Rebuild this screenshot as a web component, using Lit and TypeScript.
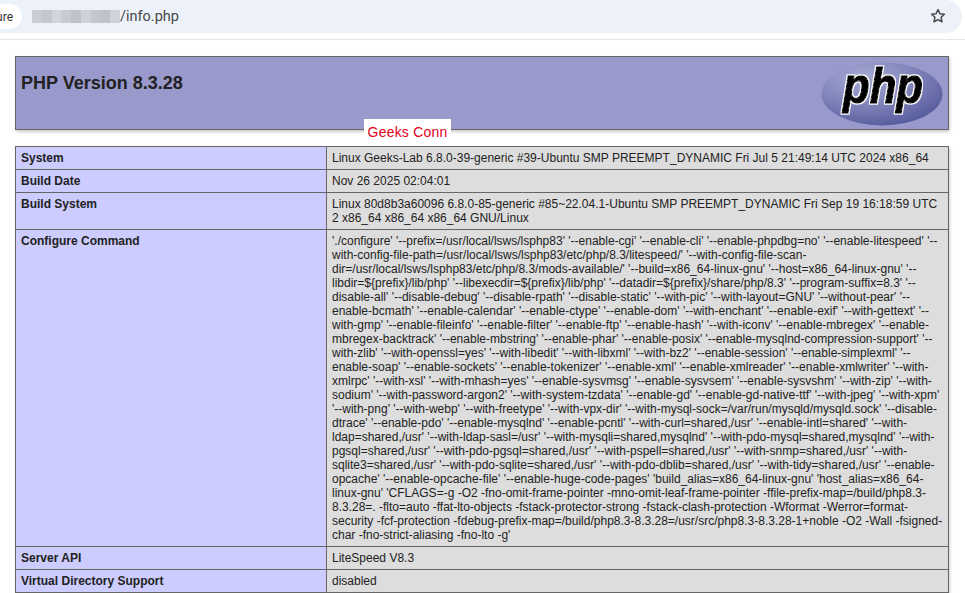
import { LitElement, html, css } from "lit";
import { customElement } from "lit/decorators.js";

const CONFIG = [
  "'./configure' '--prefix=/usr/local/lsws/lsphp83' '--enable-cgi' '--enable-cli' '--enable-phpdbg=no' '--enable-litespeed' '--",
  "with-config-file-path=/usr/local/lsws/lsphp83/etc/php/8.3/litespeed/' '--with-config-file-scan-",
  "dir=/usr/local/lsws/lsphp83/etc/php/8.3/mods-available/' '--build=x86_64-linux-gnu' '--host=x86_64-linux-gnu' '--",
  "libdir=${prefix}/lib/php' '--libexecdir=${prefix}/lib/php' '--datadir=${prefix}/share/php/8.3' '--program-suffix=8.3' '--",
  "disable-all' '--disable-debug' '--disable-rpath' '--disable-static' '--with-pic' '--with-layout=GNU' '--without-pear' '--",
  "enable-bcmath' '--enable-calendar' '--enable-ctype' '--enable-dom' '--with-enchant' '--enable-exif' '--with-gettext' '--",
  "with-gmp' '--enable-fileinfo' '--enable-filter' '--enable-ftp' '--enable-hash' '--with-iconv' '--enable-mbregex' '--enable-",
  "mbregex-backtrack' '--enable-mbstring' '--enable-phar' '--enable-posix' '--enable-mysqlnd-compression-support' '--",
  "with-zlib' '--with-openssl=yes' '--with-libedit' '--with-libxml' '--with-bz2' '--enable-session' '--enable-simplexml' '--",
  "enable-soap' '--enable-sockets' '--enable-tokenizer' '--enable-xml' '--enable-xmlreader' '--enable-xmlwriter' '--with-",
  "xmlrpc' '--with-xsl' '--with-mhash=yes' '--enable-sysvmsg' '--enable-sysvsem' '--enable-sysvshm' '--with-zip' '--with-",
  "sodium' '--with-password-argon2' '--with-system-tzdata' '--enable-gd' '--enable-gd-native-ttf' '--with-jpeg' '--with-xpm'",
  "'--with-png' '--with-webp' '--with-freetype' '--with-vpx-dir' '--with-mysql-sock=/var/run/mysqld/mysqld.sock' '--disable-",
  "dtrace' '--enable-pdo' '--enable-mysqlnd' '--enable-pcntl' '--with-curl=shared,/usr' '--enable-intl=shared' '--with-",
  "ldap=shared,/usr' '--with-ldap-sasl=/usr' '--with-mysqli=shared,mysqlnd' '--with-pdo-mysql=shared,mysqlnd' '--with-",
  "pgsql=shared,/usr' '--with-pdo-pgsql=shared,/usr' '--with-pspell=shared,/usr' '--with-snmp=shared,/usr' '--with-",
  "sqlite3=shared,/usr' '--with-pdo-sqlite=shared,/usr' '--with-pdo-dblib=shared,/usr' '--with-tidy=shared,/usr' '--enable-",
  "opcache' '--enable-opcache-file' '--enable-huge-code-pages' 'build_alias=x86_64-linux-gnu' 'host_alias=x86_64-",
  "linux-gnu' 'CFLAGS=-g -O2 -fno-omit-frame-pointer -mno-omit-leaf-frame-pointer -ffile-prefix-map=/build/php8.3-",
  "8.3.28=. -flto=auto -ffat-lto-objects -fstack-protector-strong -fstack-clash-protection -Wformat -Werror=format-",
  "security -fcf-protection -fdebug-prefix-map=/build/php8.3-8.3.28=/usr/src/php8.3-8.3.28-1+noble -O2 -Wall -fsigned-",
  "char -fno-strict-aliasing -fno-lto -g'",
];

const BLUR = ["#c9cdd4", "#c3c7ce", "#d2d5da", "#c8cbd1", "#bfc3ca", "#ced1d7", "#c4c8ce", "#bfc2c9", "#d0d3d9"];

@customElement("app-root")
export class AppRoot extends LitElement {
  static styles = css`
    :host {
      display: block;
      position: relative;
      width: 965px;
      height: 593px;
      overflow: hidden;
      background: #fff;
      color: #222;
      font-family: "Liberation Sans", Arial, sans-serif;
    }
    .toolbar {
      height: 40px;
      box-sizing: border-box;
      border-bottom: 1px solid #e6e6e9;
      background: #fff;
    }
    .omnibox {
      width: 962px;
      height: 33px;
      background: #edf2fa;
      border-radius: 0 17px 17px 0;
      display: flex;
      align-items: center;
      font-family: Roboto, "Liberation Sans", sans-serif;
      font-size: 14.5px;
      color: #474747;
    }
    .chip {
      width: 22px;
      height: 25px;
      margin-right: 10px;
      border-radius: 0 13px 13px 0;
      background: #fff;
      display: flex;
      align-items: center;
      justify-content: flex-end;
      padding-right: 9px;
      box-sizing: border-box;
      font-size: 12px;
      color: #333;
      white-space: nowrap;
    }
    .blur {
      display: flex;
      width: 88px;
      height: 13px;
    }
    .blur i {
      flex: 1;
      display: block;
    }
    .star {
      margin-left: auto;
      margin-right: 16px;
      width: 16px;
      height: 16px;
      margin-top: -1px;
    }
    .page {
      padding: 16px 16px 0 15px;
      font-size: 12px;
      line-height: 14px;
    }
    .head {
      box-sizing: border-box;
      height: 74px;
      border: 1px solid #666;
      background: #9999cc;
      box-shadow: 1px 2px 3px #ccc;
      display: flex;
      justify-content: space-between;
      padding: 0 5px;
    }
    h1 {
      margin: 16px 0 0;
      font-size: 18px;
      line-height: 21px;
      font-weight: bold;
      color: #222;
    }
    .logo {
      width: 122px;
      height: 64px;
      margin-top: 5px;
    }
    table {
      margin-top: 16px;
      width: 934px;
      border-collapse: collapse;
      table-layout: fixed;
      box-shadow: 1px 2px 3px #ccc;
    }
    td {
      border: 1px solid #666;
      padding: 4px 5px;
      vertical-align: baseline;
      white-space: nowrap;
    }
    .e {
      width: 300px;
      background: #ccccff;
      font-weight: bold;
    }
    .v {
      background: #dddddd;
    }
    .tag {
      position: absolute;
      left: 364px;
      top: 119px;
      width: 87px;
      height: 22px;
      background: #fff;
      color: #e2001a;
      font-size: 14px;
      line-height: 26px;
      text-align: center;
      letter-spacing: 0.2px;
    }
  `;

  private row(label: string, value: unknown) {
    return html`<tr><td class="e">${label}</td><td class="v">${value}</td></tr>`;
  }

  render() {
    return html`
      <div class="toolbar">
        <div class="omnibox">
          <div class="chip">ure</div>
          <div class="blur">${BLUR.map((c) => html`<i style="background:${c}"></i>`)}</div>
          <span>/info.php</span>
          <svg class="star" viewBox="0 0 16 16" fill="none" stroke="#474747" stroke-width="1.5" stroke-linejoin="round">
            <path d="M8 1.6l1.95 4.1 4.45.55-3.28 3.07.85 4.45L8 11.6l-3.97 2.17.85-4.45L1.6 6.25l4.45-.55z" />
          </svg>
        </div>
      </div>
      <div class="page">
        <div class="head">
          <h1>PHP Version 8.3.28</h1>
          <svg class="logo" viewBox="0 0 122 64">
            <defs>
              <radialGradient id="g" cx="35%" cy="25%" r="85%">
                <stop offset="0" stop-color="#a8abd6" />
                <stop offset="0.6" stop-color="#777bb3" />
                <stop offset="1" stop-color="#4f5499" />
              </radialGradient>
              <filter id="halo" x="-10%" y="-10%" width="120%" height="120%">
                <feMorphology in="SourceAlpha" operator="dilate" radius="0.8" result="d" />
                <feFlood flood-color="#fff" />
                <feComposite in2="d" operator="in" result="o" />
                <feMerge>
                  <feMergeNode in="o" />
                  <feMergeNode in="SourceGraphic" />
                </feMerge>
              </filter>
            </defs>
            <ellipse cx="61" cy="32" rx="60.5" ry="31.5" fill="url(#g)" />
            <text
              x="62"
              y="41"
              text-anchor="middle"
              font-family="'Liberation Sans', Arial, sans-serif"
              font-size="50"
              font-weight="bold"
              font-style="italic"
              textLength="80"
              lengthAdjust="spacingAndGlyphs"
              fill="#000"
              stroke="#000"
              stroke-width="1.3"
              filter="url(#halo)"
            >php</text>
          </svg>
        </div>
        <table>
          ${this.row("System", "Linux Geeks-Lab 6.8.0-39-generic #39-Ubuntu SMP PREEMPT_DYNAMIC Fri Jul 5 21:49:14 UTC 2024 x86_64")}
          ${this.row("Build Date", "Nov 26 2025 02:04:01")}
          ${this.row(
            "Build System",
            html`Linux 80d8b3a60096 6.8.0-85-generic #85~22.04.1-Ubuntu SMP PREEMPT_DYNAMIC Fri Sep 19 16:18:59 UTC<br />2 x86_64 x86_64 x86_64 GNU/Linux`
          )}
          ${this.row("Configure Command", CONFIG.map((l) => html`${l}<br />`))}
          ${this.row("Server API", "LiteSpeed V8.3")}
          ${this.row("Virtual Directory Support", "disabled")}
        </table>
      </div>
      <div class="tag">Geeks Conn</div>
    `;
  }
}
